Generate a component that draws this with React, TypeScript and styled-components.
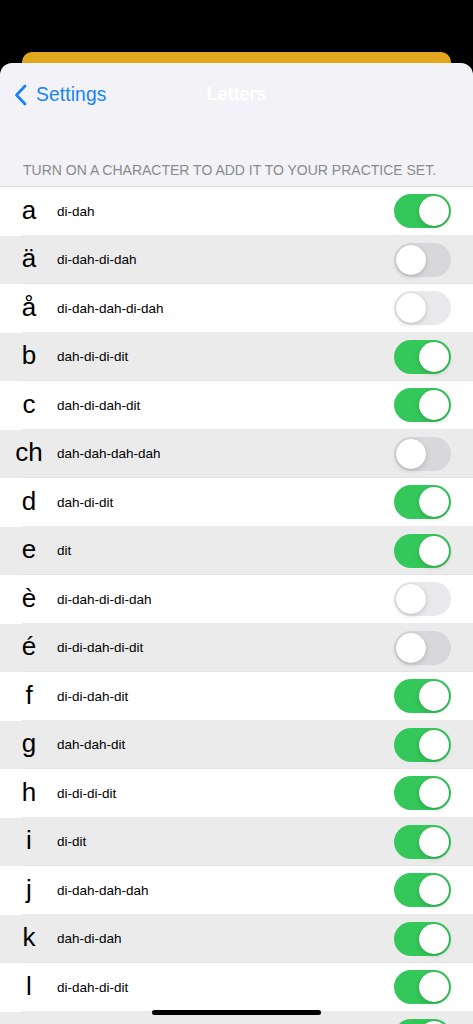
import React from 'react';
import styled, { createGlobalStyle } from 'styled-components';

const GlobalStyle = createGlobalStyle`
  html, body {
    margin: 0;
    padding: 0;
    background: #000;
  }
  body {
    font-family: 'Liberation Sans', Arial, sans-serif;
    -webkit-font-smoothing: antialiased;
  }
`;

const Screen = styled.div`
  width: 473px;
  height: 1024px;
  overflow: hidden;
  position: relative;
  background: #000;
  padding-top: 52px;
  box-sizing: border-box;
`;

const BackCard = styled.div`
  height: 24px;
  margin: 0 22px;
  background: #e1a81f;
  border-radius: 10px 10px 0 0;
`;

const Sheet = styled.div`
  margin-top: -13px;
  background: #f2f2f7;
  border-radius: 12px 12px 0 0;
  overflow: hidden;
  min-height: 1000px;
`;

const NavBar = styled.div`
  height: 63px;
  display: flex;
  align-items: center;
  position: relative;
  padding: 0 14px;
`;

const BackButton = styled.div`
  display: flex;
  align-items: center;
  gap: 9px;
  color: #1a82fb;
  font-size: 19.3px;
  letter-spacing: 0.1px;
`;

const NavTitle = styled.div`
  position: absolute;
  left: 0;
  right: 0;
  text-align: center;
  color: #fff;
  font-size: 18px;
  font-weight: 700;
  pointer-events: none;
`;

const SectionHeader = styled.div`
  height: 60px;
  display: flex;
  align-items: flex-end;
  padding: 0 23px 8px;
  box-sizing: border-box;
  color: #8a8a8e;
  font-size: 14px;
  letter-spacing: 0;
`;

const List = styled.div`
  border-top: 1px solid #dcdce0;
`;

const Row = styled.div<{ $shaded: boolean }>`
  height: 48.5px;
  display: flex;
  align-items: center;
  padding: 0 22px 0 15px;
  background: ${(p) => (p.$shaded ? '#ebebeb' : '#ffffff')};
  position: relative;
  box-sizing: border-box;

  &::after {
    content: '';
    position: absolute;
    left: 22px;
    right: 0;
    bottom: 0;
    height: 1px;
    background: #dedede;
    transform: scaleY(0.6);
  }
`;

const Letter = styled.div`
  width: 28px;
  text-align: center;
  font-size: 26px;
  color: #000;
  line-height: 1;
  padding-bottom: 3px;
`;

const Code = styled.div`
  flex: 1;
  margin-left: 14px;
  font-size: 13.5px;
  color: #000;
`;

const Track = styled.div<{ $on: boolean }>`
  width: 57px;
  height: 34px;
  border-radius: 17px;
  background: ${(p) => (p.$on ? '#34c759' : 'rgba(120, 120, 128, 0.16)')};
  position: relative;
  flex-shrink: 0;
`;

const Knob = styled.div<{ $on: boolean }>`
  position: absolute;
  top: 2px;
  left: ${(p) => (p.$on ? '25px' : '2px')};
  width: 30px;
  height: 30px;
  border-radius: 50%;
  background: #fff;
  box-shadow: 0 2px 5px rgba(0, 0, 0, 0.15), 0 0 1px rgba(0, 0, 0, 0.2);
`;

const HomeIndicator = styled.div`
  position: absolute;
  left: 152px;
  bottom: 9px;
  width: 169px;
  height: 5px;
  border-radius: 3px;
  background: #000;
`;

const letters: [string, string, boolean][] = [
  ['a', 'di-dah', true],
  ['ä', 'di-dah-di-dah', false],
  ['å', 'di-dah-dah-di-dah', false],
  ['b', 'dah-di-di-dit', true],
  ['c', 'dah-di-dah-dit', true],
  ['ch', 'dah-dah-dah-dah', false],
  ['d', 'dah-di-dit', true],
  ['e', 'dit', true],
  ['è', 'di-dah-di-di-dah', false],
  ['é', 'di-di-dah-di-dit', false],
  ['f', 'di-di-dah-dit', true],
  ['g', 'dah-dah-dit', true],
  ['h', 'di-di-di-dit', true],
  ['i', 'di-dit', true],
  ['j', 'di-dah-dah-dah', true],
  ['k', 'dah-di-dah', true],
  ['l', 'di-dah-di-dit', true],
  ['m', 'dah-dah', true],
];

const Toggle = ({ on }: { on: boolean }) => (
  <Track $on={on}>
    <Knob $on={on} />
  </Track>
);

export default function App() {
  return (
    <>
      <GlobalStyle />
      <Screen>
        <BackCard />
        <Sheet>
          <NavBar>
            <BackButton>
              <svg width="13" height="22" viewBox="0 0 13 22">
                <path
                  d="M11 2 L2.5 11 L11 20"
                  fill="none"
                  stroke="#1a82fb"
                  strokeWidth="2.8"
                  strokeLinecap="round"
                  strokeLinejoin="round"
                />
              </svg>
              Settings
            </BackButton>
            <NavTitle>Letters</NavTitle>
          </NavBar>
          <SectionHeader>TURN ON A CHARACTER TO ADD IT TO YOUR PRACTICE SET.</SectionHeader>
          <List>
            {letters.map(([ch, code, on], i) => (
              <Row key={ch} $shaded={i % 2 === 1}>
                <Letter>{ch}</Letter>
                <Code>{code}</Code>
                <Toggle on={on} />
              </Row>
            ))}
          </List>
        </Sheet>
        <HomeIndicator />
      </Screen>
    </>
  );
}
